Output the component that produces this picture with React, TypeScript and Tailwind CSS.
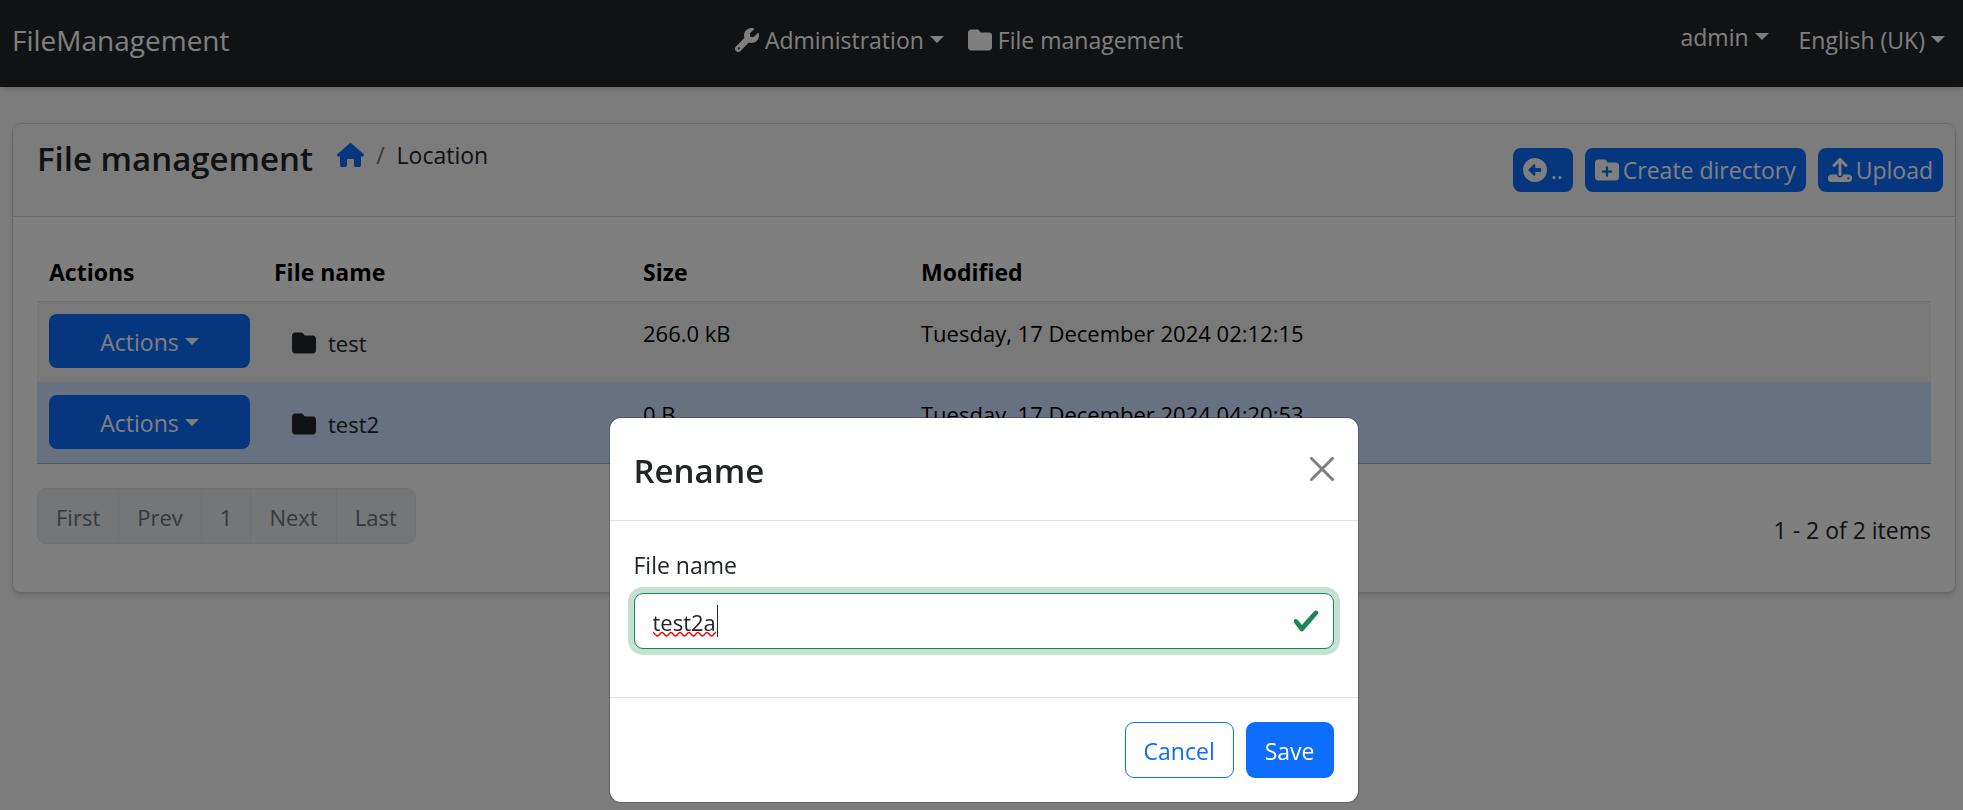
import { useState } from 'react';
import type { ReactNode } from 'react';
import { FaFolder, FaFolderPlus, FaUpload, FaWrench } from 'react-icons/fa6';

function HomeIcon() {
  return (
    <svg viewBox="0 0 27 24" className="h-6 w-[27px]" fill="currentColor" aria-hidden="true">
      <path d="M12.5.4a1.5 1.5 0 0 1 2 0l12 10.5c1.1 1 .5 2.6-1 2.6H24v8.7c0 1-.8 1.8-1.8 1.8h-3.4c-1 0-1.8-.8-1.8-1.8V17c0-.6-.4-1-1-1h-5c-.6 0-1 .4-1 1v5.200c0 1-.8 1.800-1.800 1.800H4.800c-1 0-1.800-.8-1.800-1.800v-8.700H1.500c-1.500 0-2.100-1.600-1-2.600z" />
    </svg>
  );
}

function BackIcon() {
  return (
    <svg viewBox="0 0 24 24" className="size-6" fill="currentColor" aria-hidden="true">
      <path
        fillRule="evenodd"
        d="M12 0a12 12 0 1 1 0 24a12 12 0 0 1 0-24zM5.800 11.300a1 1 0 0 0 0 1.400l4.800 4.800c.6.6 1.700.2 1.700-.7V14h5c.5 0 .9-.4.9-.9v-2.200c0-.5-.4-.9-.9-.9h-5V7.200c0-.9-1.100-1.300-1.700-.7z"
      />
    </svg>
  );
}

function Caret() {
  return (
    <span
      aria-hidden="true"
      className="inline-block border-x-[7px] border-t-[7px] border-x-transparent border-t-current"
    />
  );
}

function ToolbarButton({ icon, children }: { icon: ReactNode; children: ReactNode }) {
  return (
    <button
      type="button"
      className="flex h-11 items-center gap-1 rounded-lg bg-[#0d6efd] px-2.5 text-white"
    >
      {icon}
      <span>{children}</span>
    </button>
  );
}

const files = [
  { name: 'test', size: '266.0 kB', modified: 'Tuesday, 17 December 2024 02:12:15', selected: false },
  { name: 'test2', size: '0 B', modified: 'Tuesday, 17 December 2024 04:20:53', selected: true },
];

const pages = ['First', 'Prev', '1', 'Next', 'Last'];

function Navbar() {
  return (
    <nav className="flex h-[87px] items-center bg-[#212529] pt-1 pr-[18px] pb-3 pl-3 text-white shadow-md">
      <a href="#home" className="mr-2 text-[28px]">
        FileManagement
      </a>
      <div className="flex flex-1 justify-center gap-6">
        <button type="button" className="flex items-center gap-1.5">
          <FaWrench className="size-6" />
          Administration
          <Caret />
        </button>
        <a href="#files" className="flex items-center gap-1.5">
          <FaFolder className="size-6" />
          File management
        </a>
      </div>
      <div className="flex items-center gap-[30px]">
        <button type="button" className="mb-1.5 flex items-center gap-1.5">
          admin
          <Caret />
        </button>
        <button type="button" className="flex items-center gap-1.5">
          English (UK)
          <Caret />
        </button>
      </div>
    </nav>
  );
}

function FileTable() {
  return (
    <table className="w-full table-fixed border-collapse text-left text-black">
      <thead>
        <tr className="h-[60px] border-b border-[#dee2e6]">
          <th className="w-[225px] px-3 pt-0.5 font-bold">Actions</th>
          <th className="w-[369px] px-3 pt-0.5 font-bold">File name</th>
          <th className="w-[278px] px-3 pt-0.5 font-bold">Size</th>
          <th className="px-3 pt-0.5 font-bold">Modified</th>
        </tr>
      </thead>
      <tbody className="text-[22px]">
        {files.map((file) => (
          <tr
            key={file.name}
            className={
              file.selected
                ? 'h-[81px] border-b border-[#a6b5cc] bg-[#cfe2ff] align-top'
                : 'h-[81px] border-b border-[#dee2e6] bg-[#f2f2f2] align-top'
            }
          >
            <td className="px-3 pt-3">
              <button
                type="button"
                className="flex h-[54px] w-full items-center justify-center gap-1.5 rounded-lg bg-[#0d6efd] pt-0.5 text-[23px] text-white"
              >
                Actions
                <Caret />
              </button>
            </td>
            <td className="px-3 pt-3">
              <a href="#open" className="flex h-[54px] items-center gap-3 px-[18px] pt-1 text-[#212529]">
                <FaFolder className="size-6" />
                {file.name}
              </a>
            </td>
            <td className="px-3 pt-[13px]">{file.size}</td>
            <td className="px-3 pt-[13px]">{file.modified}</td>
          </tr>
        ))}
      </tbody>
    </table>
  );
}

function RenameDialog() {
  const [name, setName] = useState('test2a');
  return (
    <div className="fixed inset-0 flex items-end justify-center bg-black/50 pb-[7px] pl-1">
      <div
        role="dialog"
        aria-labelledby="rename-title"
        className="w-[750px] rounded-xl border border-black/20 bg-white bg-clip-padding"
      >
        <div className="flex h-[103px] items-center justify-between border-b border-[#dee2e6] px-6">
          <h2 id="rename-title" className="pt-1 text-[33px] font-semibold">
            Rename
          </h2>
          <button type="button" aria-label="Close" className="text-[#7f7f7f]">
            <svg viewBox="0 0 24 24" className="size-6" fill="none" stroke="currentColor" strokeWidth="3" strokeLinecap="round">
              <path d="M1.500 1.500l21 21M22.500 1.500l-21 21" />
            </svg>
          </button>
        </div>
        <div className="px-6 pt-[26px] pb-12">
          <label htmlFor="file-name" className="mb-2.5 block">
            File name
          </label>
          <div className="relative">
            <input
              id="file-name"
              value={name}
              spellCheck={false}
              onChange={(event) => setName(event.target.value)}
              className="block h-14 w-full rounded-[9px] border border-[#198754] bg-white px-[18px] pt-0.5 text-[22px] ring-6 ring-[#198754]/25 outline-none"
            />
            <svg
              viewBox="0 0 66 33"
              className="pointer-events-none absolute top-3 left-[19px] h-[33px] w-[66px]"
              fill="none"
              aria-hidden="true"
            >
              <path
                d="M0 27.500C2 28 2.500 31 4.500 31S7 27.500 9 27.500S11.500 31 13.500 31S16 27.500 18 27.500S20.500 31 22.500 31S25 27.500 27 27.500S29.500 31 31.500 31S34 27.500 36 27.500S38.500 31 40.500 31S43 27.500 45 27.500S47.500 31 49.500 31S52 27.500 54 27.500S56.500 31 58.500 31S61 27.500 63 27.500"
                stroke="#f00"
                strokeWidth="1.400"
              />
              <path d="M64.500 0v32" stroke="#212529" />
            </svg>
            <svg
              viewBox="0 0 8 8"
              className="pointer-events-none absolute top-3.5 right-3.5 size-7"
              fill="#198754"
              aria-hidden="true"
            >
              <path d="M2.300 6.730.6 4.530c-.4-1.040.46-1.400 1.100-.8l1.100 1.400 3.400-3.800c.6-.63 1.600-.27 1.200.7l-4 4.600c-.43.5-.8.4-1.100.1z" />
            </svg>
          </div>
        </div>
        <div className="flex h-[105px] items-center justify-end gap-3 border-t border-[#dee2e6] px-6">
          <button type="button" className="h-14 rounded-[9px] border border-[#0d6efd] px-[18px] pt-0.5 text-[#0d6efd]">
            Cancel
          </button>
          <button type="button" className="h-14 rounded-[9px] bg-[#0d6efd] px-[19px] pt-0.5 text-white">
            Save
          </button>
        </div>
      </div>
    </div>
  );
}

export default function App() {
  return (
    <div className="min-h-screen bg-[#f9f9f9] font-['Open_Sans',sans-serif] text-[23px] leading-9 text-[#212529]">
      <Navbar />
      <main className="px-3 pt-9 pr-[7px]">
        <section className="rounded-[9px] border border-[#d5d5d5] bg-white shadow-md">
          <header className="flex h-[93px] items-start justify-between rounded-t-[9px] border-b border-[#d5d5d5] bg-[#f9f9f9] pr-3 pl-6">
            <div className="flex items-start gap-6 pt-[13px]">
              <h1 className="pt-1 text-[33px] font-semibold">File management</h1>
              <ol className="flex items-center gap-3">
                <li>
                  <a href="#root" aria-label="Home" className="block text-[#0d6efd]">
                    <HomeIcon />
                  </a>
                </li>
                <li aria-hidden="true" className="text-[#6c757d]">
                  /
                </li>
                <li>Location</li>
              </ol>
            </div>
            <div className="flex gap-3 pt-6">
              <ToolbarButton icon={<BackIcon />}>..</ToolbarButton>
              <ToolbarButton icon={<FaFolderPlus className="size-6" />}>Create directory</ToolbarButton>
              <ToolbarButton icon={<FaUpload className="size-6" />}>Upload</ToolbarButton>
            </div>
          </header>
          <div className="px-6 pt-6 pb-12">
            <FileTable />
            <div className="flex items-end justify-between pt-6">
              <div className="flex overflow-hidden rounded-[9px] border border-[#dee2e6] bg-[#e9ecef] text-[22px] text-[#6c757d]">
                {pages.map((page) => (
                  <button
                    key={page}
                    type="button"
                    disabled
                    className="h-[54px] border-r border-[#dee2e6] px-[18px] pt-0.5 last:border-r-0"
                  >
                    {page}
                  </button>
                ))}
              </div>
              <span className="leading-7">1 - 2 of 2 items</span>
            </div>
          </div>
        </section>
      </main>
      <RenameDialog />
    </div>
  );
}
